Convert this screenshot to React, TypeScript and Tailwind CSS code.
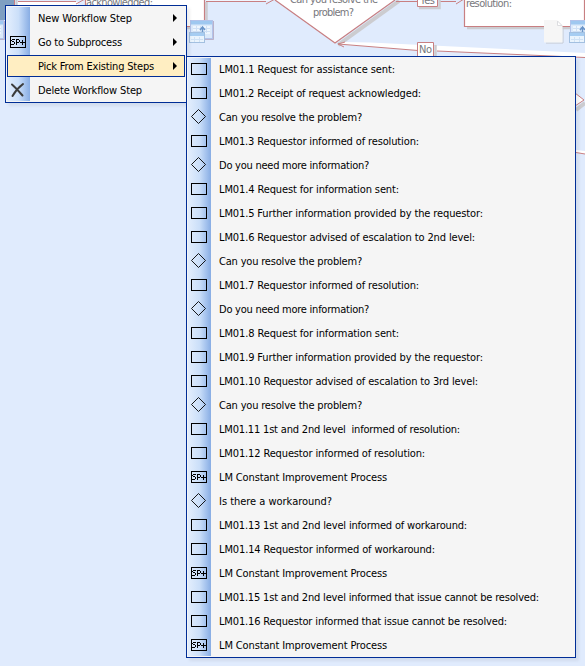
import { useLayoutEffect, useRef, useState } from 'react';

type Kind = 'box' | 'diamond' | 'sub' | 'delete' | 'none';

interface Item {
  kind: Kind;
  text: string;
  width: number;
}

const menuItems: (Item & { arrow?: boolean; active?: boolean })[] = [
  { kind: 'none', text: 'New Workflow Step', width: 94, arrow: true },
  { kind: 'sub', text: 'Go to Subprocess', width: 84, arrow: true },
  { kind: 'none', text: 'Pick From Existing Steps', width: 116, arrow: true, active: true },
  { kind: 'delete', text: 'Delete Workflow Step', width: 104 },
];

const steps: Item[] = [
  { kind: 'box', text: 'LM01.1 Request for assistance sent:', width: 176 },
  { kind: 'box', text: 'LM01.2 Receipt of request acknowledged:', width: 202 },
  { kind: 'diamond', text: 'Can you resolve the problem?', width: 143 },
  { kind: 'box', text: 'LM01.3 Requestor informed of resolution:', width: 200 },
  { kind: 'diamond', text: 'Do you need more information?', width: 150 },
  { kind: 'box', text: 'LM01.4 Request for information sent:', width: 180 },
  { kind: 'box', text: 'LM01.5 Further information provided by the requestor:', width: 264 },
  { kind: 'box', text: 'LM01.6 Requestor advised of escalation to 2nd level:', width: 256 },
  { kind: 'diamond', text: 'Can you resolve the problem?', width: 143 },
  { kind: 'box', text: 'LM01.7 Requestor informed of resolution:', width: 200 },
  { kind: 'diamond', text: 'Do you need more information?', width: 150 },
  { kind: 'box', text: 'LM01.8 Request for information sent:', width: 180 },
  { kind: 'box', text: 'LM01.9 Further information provided by the requestor:', width: 264 },
  { kind: 'box', text: 'LM01.10 Requestor advised of escalation to 3rd level:', width: 259 },
  { kind: 'diamond', text: 'Can you resolve the problem?', width: 143 },
  { kind: 'box', text: 'LM01.11 1st and 2nd level  informed of resolution:', width: 241 },
  { kind: 'box', text: 'LM01.12 Requestor informed of resolution:', width: 206 },
  { kind: 'sub', text: 'LM Constant Improvement Process', width: 168 },
  { kind: 'diamond', text: 'Is there a workaround?', width: 113 },
  { kind: 'box', text: 'LM01.13 1st and 2nd level informed of workaround:', width: 248 },
  { kind: 'box', text: 'LM01.14 Requestor informed of workaround:', width: 216 },
  { kind: 'sub', text: 'LM Constant Improvement Process', width: 168 },
  { kind: 'box', text: 'LM01.15 1st and 2nd level informed that issue cannot be resolved:', width: 320 },
  { kind: 'box', text: 'LM01.16 Requestor informed that issue cannot be resolved:', width: 288 },
  { kind: 'sub', text: 'LM Constant Improvement Process', width: 168 },
];

/* Label whose tracking is adjusted so that it fills the given width. */
function Label({ text, width }: { text: string; width: number }) {
  const ref = useRef<HTMLSpanElement>(null);
  const [spacing, setSpacing] = useState(0);
  useLayoutEffect(() => {
    if (ref.current) {
      setSpacing((width - ref.current.getBoundingClientRect().width) / text.length);
    }
  }, [text, width]);
  return (
    <span ref={ref} className="whitespace-pre" style={{ letterSpacing: spacing }}>
      {text}
    </span>
  );
}

function StepIcon({ kind }: { kind: Kind }) {
  if (kind === 'none') return null;
  return (
    <svg width="16" height="16" viewBox="0 0 16 16" fill="none" stroke="#000" shapeRendering="crispEdges">
      {kind === 'box' && <rect x="0.5" y="2.5" width="15" height="11" />}
      {kind === 'diamond' && (
        <path d="M7.5 0.5L14.5 7.5L7.5 14.5L0.5 7.5Z" shapeRendering="auto" strokeWidth="0.9" />
      )}
      {kind === 'sub' && (
        <>
          <rect x="0.5" y="2.5" width="15" height="11" />
          <path d="M2 5.5H5M1.5 6V7M2 7.5H4M4.500 8V10M1 10.5H4M6.5 11V5M7 5.5H9M9.500 6V8M7 8.5H9M10 8.5H15M12.5 6V11" />
        </>
      )}
      {kind === 'delete' && (
        <path
          d="M2 2.5C5 5 9 9.5 12.5 13.5M13 2C9 5 5 9.5 2.5 14"
          stroke="#3c3c3c"
          strokeWidth="2"
          strokeLinecap="round"
          shapeRendering="auto"
        />
      )}
    </svg>
  );
}

function TableIcon({ x, y }: { x: number; y: number }) {
  return (
    <g transform={`translate(${x} ${y})`}>
      <path d="M16 19.500H24.500V1" stroke="#a08ca8" strokeOpacity=".6" />
      <rect x="1.5" y=".5" width="22" height="18" fill="#dbe9fa" stroke="#b3c3ea" />
      <path d="M2 1H23V4.500H2Z" fill="#9fc8f0" />
      <path d="M4 6H21V14H4Z" fill="#eef6fe" />
      <path d="M4 8.500H21M4 11.500H21M7.500 6V13M11.500 6V13M17.500 6V13" stroke="#cfe0f5" />
      <path d="M13.500 14V7.500M11 10L13.500 7L16 10" stroke="#6a94c8" strokeWidth="1.500" />
      <rect x=".5" y="12.500" width="15" height="10" fill="#eaf4fd" stroke="#a3c0e0" />
      <path d="M1 13H15V16H1Z" fill="#a6cdf2" />
      <path d="M2 19.500H14M5.500 17V22M10.500 17V22" stroke="#d0e2f5" />
    </g>
  );
}

function Diagram() {
  return (
    <svg
      className="absolute inset-0"
      width="585"
      height="666"
      fill="none"
      fontFamily="'DejaVu Sans Condensed', 'Noto Sans', sans-serif"
      fontSize="11"
    >
      <path d="M0 0H14V20H0Z" fill="#7f9fc1" />
      <path d="M16.500 0V5" stroke="#ccccd0" strokeWidth="2" />
      <path d="M14.500 0V5" stroke="#c87f82" />
      <path d="M18 2H78V5H18Z" fill="#fff" />
      <path d="M18 1.500H76M76 4L85 -1" stroke="#c87f82" />
      <path d="M85 0H204V26H85Z" fill="#fff" />
      <path d="M206.500 2V28H187" stroke="#ccccd0" strokeWidth="2.500" />
      <path d="M204.500 0V26.500H187M85.500 0V5" stroke="#c87f82" strokeWidth="1.200" />
      <path d="M206 1.500H266M266 4L275 -1" stroke="#c87f82" />
      <path d="M206 0H270" stroke="#fff" strokeWidth="1" />
      <TableIcon x={-20} y={20} />
      <TableIcon x={189} y={20} />

      <path d="M338 45L399 1" stroke="#ccccd0" strokeWidth="4" />
      <path d="M275 0L335 43L395 0Z" fill="#fff" />
      <path d="M275 0L335 43L395 0" stroke="#c87f82" strokeWidth="1.200" />
      <path d="M343 42L370 42.500L585 53V57.500L437 51L417 50.500L340 44.500Z" fill="#fff" />
      <path d="M338 44L418 50.500M437 51L585 57.500M345 42L338 44L344 47" stroke="#c87f82" />

      <path d="M396 1.500H417M439 1.500H456M456 4L464 -1" stroke="#c87f82" />
      <path d="M419 8H439.500V0" stroke="#ccccd0" strokeWidth="2.500" />
      <path d="M417.500 -4H437.500V6.500H417.500Z" fill="#fff" stroke="#c87f82" />
      <path d="M435.500 45V58" stroke="#ccccd0" strokeWidth="2.500" />
      <path d="M417.500 42.500H433.500V60H417.500Z" fill="#fff" stroke="#c87f82" />
      <path d="M467 28H585" stroke="#ccccd0" strokeWidth="2.500" />
      <path d="M464.500 -2H584.500V26.500H464.500Z" fill="#fff" stroke="#c87f82" strokeWidth="1.200" />
      <path d="M546 43H563V27" stroke="#c3c8d0" />
      <path d="M544 20H557L562.500 25.500V42.500H544Z" fill="#f6f6f6" />
      <path d="M557.500 21V25.500H562L557.500 21" fill="#fff" stroke="#dcdde0" />
      <TableIcon x={569} y={20} />

      <path d="M576 110L585 103" stroke="#ccccd0" strokeWidth="4" />
      <path d="M575 93L584 100L575 107Z" fill="#fff" />
      <path d="M575 93L584 100L575 106" stroke="#c87f82" />
      <path d="M576 150L585 151V154L576 153Z" fill="#fff" />
      <path d="M576 152.500L585 154" stroke="#c87f82" />

      <g fill="#77777c">
        <text x="86" y="6" textLength="67">acknowledged:</text>
        <text x="290" y="3" textLength="88">Can you resolve the</text>
        <text x="313" y="16" textLength="41">problem?</text>
        <text x="420" y="4" textLength="15">Yes</text>
        <text x="419" y="53" textLength="13">No</text>
        <text x="466" y="7" textLength="46">resolution:</text>
      </g>
    </svg>
  );
}

const gutter = 'bg-linear-to-r from-[#e3eefd] via-[#cbdff9] to-[#88ade4]';

export default function App() {
  return (
    <div className="relative h-[666px] w-[585px] overflow-hidden bg-[#e0ebfd] font-['DejaVu_Sans_Condensed','Noto_Sans',sans-serif] text-[11px] leading-none text-black">
      <Diagram />

      <div className="absolute top-[5px] left-[5px] h-[98px] w-[182px] border border-[#002d96] bg-[#f5f5f5] shadow-[3px_3px_3px_#00000010]">
        <div className={`absolute top-px bottom-px left-px w-[23px] ${gutter}`} />
        <div className="relative flex flex-col">
          {menuItems.map((item) => (
            <div key={item.text} className="h-6 px-px py-px">
              <div
                className={`flex h-[22px] items-center border ${
                  item.active ? 'border-[#002d96] bg-[#ffeec2]' : 'border-transparent'
                }`}
              >
                <div className="ml-0.5 flex w-[28px] shrink-0">
                  <StepIcon kind={item.kind} />
                </div>
                <Label text={item.text} width={item.width} />
                {item.arrow && (
                  <svg className="mr-[7px] ml-auto" width="4" height="8" viewBox="0 0 4 8">
                    <path d="M0 0L4 4L0 8Z" />
                  </svg>
                )}
              </div>
            </div>
          ))}
        </div>
      </div>

      <div className="absolute top-[56px] left-[186px] h-[602px] w-[390px] border border-[#002d96] bg-[#f5f5f5] shadow-[3px_3px_3px_#00000010]">
        <div className={`absolute top-px bottom-px left-px w-[23px] ${gutter}`} />
        <div className="relative flex flex-col">
          {steps.map((step, index) => (
            <div key={index} className="flex h-6 items-center pl-1">
              <div className="flex w-[28px] shrink-0">
                <StepIcon kind={step.kind} />
              </div>
              <Label text={step.text} width={step.width} />
            </div>
          ))}
        </div>
      </div>
    </div>
  );
}
